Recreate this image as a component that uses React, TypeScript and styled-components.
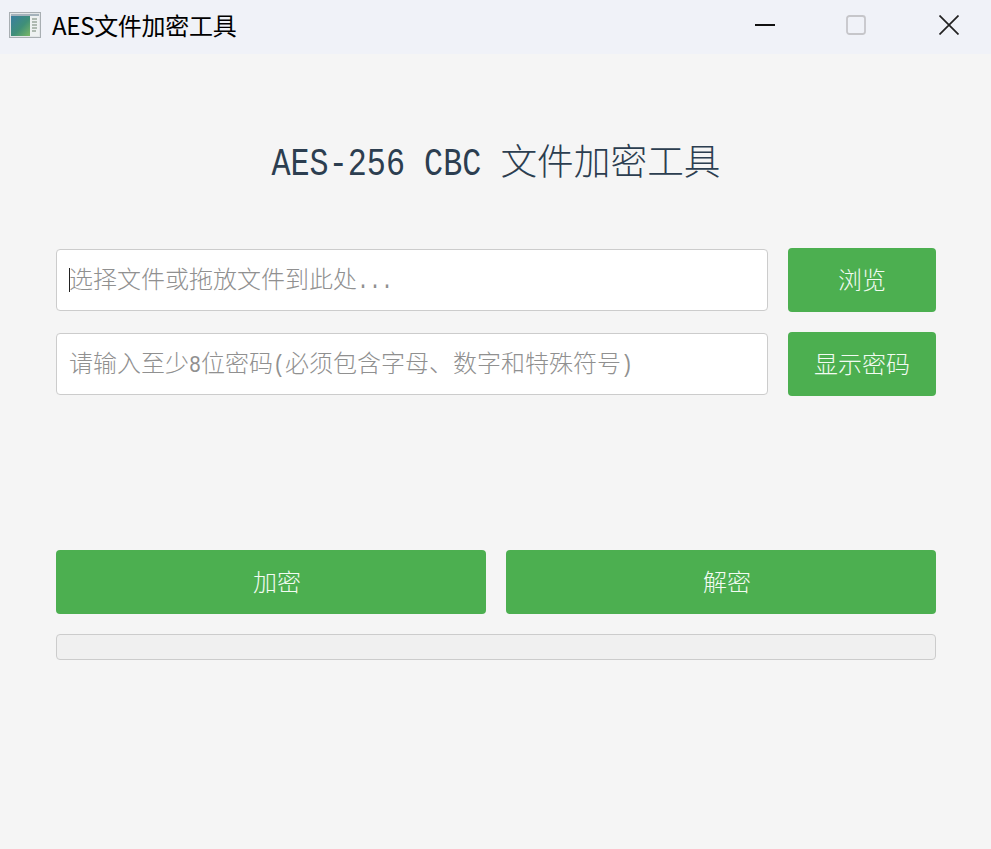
import React from "react";
import styled, { createGlobalStyle } from "styled-components";

const Global = createGlobalStyle`
  html, body { margin: 0; padding: 0; background: #f5f5f5; }
  #root { width: 991px; height: 849px; overflow: hidden; }
`;

const Window = styled.div`
  width: 991px;
  height: 849px;
  display: flex;
  flex-direction: column;
  background: #f5f5f5;
  font-family: "Noto Sans CJK SC", "Noto Sans", sans-serif;
`;

const TitleBar = styled.header`
  height: 54px;
  flex: none;
  box-sizing: border-box;
  display: flex;
  align-items: center;
  padding: 0 0 4px 9px;
  background: #f0f2f8;
  overflow: hidden;
`;

const AppName = styled.span`
  margin-left: 11px;
  font-family: "Noto Sans CJK SC", "Noto Sans", sans-serif;
  font-size: 24px;
  line-height: 30px;
  letter-spacing: -0.3px;
  color: #000;
`;

const Controls = styled.div`
  margin-left: auto;
  margin-right: -4px;
  display: flex;
`;

const ControlButton = styled.div`
  width: 92px;
  height: 50px;
  display: flex;
  align-items: center;
  justify-content: center;
`;

const MaximizeSlot = styled(ControlButton)`
  padding-right: 2px;
  width: 90px;
`;

const Main = styled.main`
  flex: 1;
  display: flex;
  flex-direction: column;
  padding: 0 55px 0 56px;
`;

const Heading = styled.h1`
  margin: 82px 0 0;
  height: 46px;
  text-align: center;
  font-family: "Noto Sans CJK SC", sans-serif;
  font-size: 36.7px;
  font-weight: 300;
  line-height: 46px;
  color: #2c3e50;
  white-space: pre;
`;

const HeadingLatin = styled.span`
  display: inline-block;
  font-family: "Liberation Mono", monospace;
  font-size: 31.8px;
  font-weight: 400;
  transform: scaleY(1.23);
  transform-origin: 50% 72%;
`;

const Row = styled.div`
  display: flex;
  align-items: center;
  gap: 20px;
  height: 64px;
`;

const FileRow = styled(Row)`
  margin-top: 66px;
`;

const PasswordRow = styled(Row)`
  margin-top: 20px;
`;

const Field = styled.div`
  position: relative;
  flex: 1;
  box-sizing: border-box;
  height: 62px;
  padding: 10px 0 0 12px;
  background: #fff;
  border: 1px solid #ccc;
  border-radius: 4px;
  font-size: 24px;
  font-weight: 300;
  line-height: 36px;
  color: #909090;
  white-space: pre;
`;

const Mono = styled.span`
  display: inline-block;
  font-family: "Liberation Mono", monospace;
  font-size: 20px;
  line-height: 20px;
  transform: scaleY(1.22);
  transform-origin: 50% 76%;
`;

const Caret = styled.span`
  position: absolute;
  left: 12px;
  top: 18px;
  width: 1px;
  height: 24px;
  background: #222;
`;

const Button = styled.button<{ $wide?: boolean }>`
  flex: ${(p) => (p.$wide ? "1" : "none")};
  width: ${(p) => (p.$wide ? "auto" : "148px")};
  height: 64px;
  padding: 0 0 4px ${(p) => (p.$wide ? "12px" : "0")};
  border: 0;
  border-radius: 4px;
  background: #4caf50;
  color: #f2fbf2;
  font-family: "Noto Sans CJK SC", sans-serif;
  font-size: 24px;
  font-weight: 300;
`;

const ActionRow = styled(Row)`
  margin-top: 154px;
`;

const Progress = styled.div`
  box-sizing: border-box;
  margin-top: 20px;
  height: 26px;
  background: #f0f0f0;
  border: 1px solid #ccc;
  border-radius: 4px;
`;

const AppIcon = () => (
  <svg width="32" height="26" viewBox="0 0 32 26">
    <defs>
      <linearGradient id="pane" x1="0" y1="0" x2="1" y2="1">
        <stop offset="0" stopColor="#3b7ea0" />
        <stop offset="0.55" stopColor="#3f8f78" />
        <stop offset="1" stopColor="#7ab765" />
      </linearGradient>
    </defs>
    <rect x="0.5" y="0.5" width="31" height="25" fill="#e3e6e8" stroke="#a8aeb2" />
    <rect x="2" y="2" width="28" height="2.5" fill="#a5b2bb" />
    <rect x="2" y="4" width="19" height="20" fill="url(#pane)" />
    <rect x="21" y="4" width="9" height="20" fill="#eef1f1" />
    <path d="M23 7h5M23 10h5M23 13h5M23 16h5M23 19h4" stroke="#9aa89c" strokeWidth="1.4" />
  </svg>
);

const MinimizeIcon = () => (
  <svg width="20" height="20" viewBox="0 0 20 20">
    <path d="M0 10h20" stroke="#111" strokeWidth="2" />
  </svg>
);

const MaximizeIcon = () => (
  <svg width="20" height="20" viewBox="0 0 20 20">
    <rect x="1" y="1" width="18" height="18" rx="2.5" fill="none" stroke="#c6c6ca" strokeWidth="1.8" />
  </svg>
);

const CloseIcon = () => (
  <svg width="20" height="20" viewBox="0 0 20 20">
    <path d="M0.5 0.5L19.5 19.5M19.5 0.5L0.5 19.5" stroke="#222" strokeWidth="1.7" />
  </svg>
);

export default function App() {
  return (
    <Window>
      <Global />
      <TitleBar>
        <AppIcon />
        <AppName>AES文件加密工具</AppName>
        <Controls>
          <ControlButton><MinimizeIcon /></ControlButton>
          <MaximizeSlot><MaximizeIcon /></MaximizeSlot>
          <ControlButton><CloseIcon /></ControlButton>
        </Controls>
      </TitleBar>
      <Main>
        <Heading>
          <HeadingLatin>AES-256 CBC </HeadingLatin>文件加密工具
        </Heading>
        <FileRow>
          <Field>
            <Caret />
            选择文件或拖放文件到此处<Mono>...</Mono>
          </Field>
          <Button>浏览</Button>
        </FileRow>
        <PasswordRow>
          <Field>
            请输入至少<Mono>8</Mono>位密码<Mono>(</Mono>必须包含字母、数字和特殊符号<Mono>)</Mono>
          </Field>
          <Button>显示密码</Button>
        </PasswordRow>
        <ActionRow>
          <Button $wide>加密</Button>
          <Button $wide>解密</Button>
        </ActionRow>
        <Progress />
      </Main>
    </Window>
  );
}
